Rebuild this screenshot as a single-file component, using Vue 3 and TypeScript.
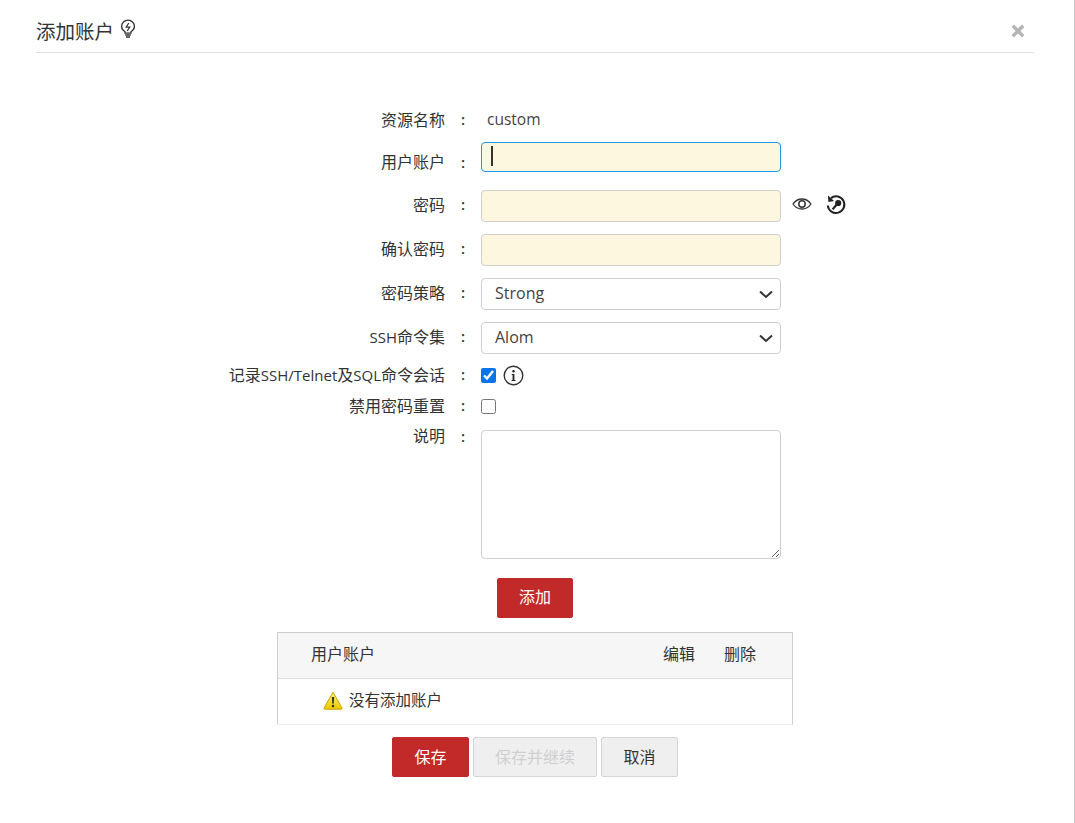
<script setup lang="ts">
const policy = ['Strong']
const commands = ['Alom']
</script>

<template>
  <div class="modal">
    <header class="head">
      <div class="title">
        <span>添加账户</span>
        <svg class="bulb" width="18" height="20" viewBox="0 0 18 20" fill="none" stroke="#333" stroke-width="1.300">
          <path d="M6 14.200v-1.500C4.200 11.700 2.600 10 2.600 7.600a6.400 6.400 0 0 1 12.800 0c0 2.400-1.600 4.100-3.400 5.100v1.500z" />
          <path d="M6.200 16h5.600M7 18h4" stroke-width="1.600" />
          <path d="M9.800 4 7.200 8.200h3.600L8.200 12" stroke-width="1.200" />
        </svg>
      </div>
      <svg class="close" width="14" height="14" viewBox="0 0 14 14" stroke="#b5b5b5" stroke-width="3.400">
        <path d="M1.800 1.800 12.200 12.200M12.200 1.800 1.800 12.200" />
      </svg>
    </header>

    <form class="form" @submit.prevent>
      <div class="row row-name">
        <label>资源名称</label><span class="colon">:</span>
        <span class="value">custom</span>
      </div>
      <div class="row row-user">
        <label>用户账户</label><span class="colon">:</span>
        <div class="caret-wrap">
          <input class="field focus" type="text" />
          <span class="caret"></span>
        </div>
      </div>
      <div class="row row-pass lifted">
        <label>密码</label><span class="colon">:</span>
        <input class="field" type="password" />
        <svg class="eye" width="20" height="14" viewBox="0 0 20 14" fill="none" stroke="#333" stroke-width="1.300">
          <path d="M1 7c2.200-3.200 5.200-5 9-5s6.800 1.800 9 5c-2.200 3.200-5.200 5-9 5s-6.800-1.800-9-5z" />
          <circle cx="10" cy="7" r="3.200" stroke-width="1.500" />
        </svg>
        <svg class="key" width="22" height="22" viewBox="0 0 22 22" fill="none" stroke="#222">
          <path d="M6 4.100A8.300 8.300 0 1 1 2.800 11.500" stroke-width="2" />
          <path d="M3 1.500 9 6.900 3.400 8z" fill="#222" stroke="none" />
          <circle cx="13.200" cy="9" r="3.100" fill="#222" stroke="none" />
          <path d="M11.500 10.800 7.600 15.400" stroke-width="2.200" />
        </svg>
      </div>
      <div class="row row-confirm lifted">
        <label>确认密码</label><span class="colon">:</span>
        <input class="field" type="password" />
      </div>
      <div class="row row-select lifted">
        <label>密码策略</label><span class="colon">:</span>
        <select class="field select">
          <option v-for="p in policy" :key="p">{{ p }}</option>
        </select>
      </div>
      <div class="row row-select lifted">
        <label><span class="latin">SSH</span>命令集</label><span class="colon">:</span>
        <select class="field select">
          <option v-for="c in commands" :key="c">{{ c }}</option>
        </select>
      </div>
      <div class="row row-check first-check">
        <label>记录<span class="latin">SSH/Telnet</span>及<span class="latin">SQL</span>命令会话</label><span class="colon">:</span>
        <input class="check" type="checkbox" checked />
        <svg class="info" width="21" height="21" viewBox="0 0 21 21" fill="none">
          <circle cx="10.500" cy="10.500" r="9.300" stroke="#333" stroke-width="1.400" />
          <circle cx="10.500" cy="6.200" r="1.200" fill="#222" />
          <path d="M8.700 9.100h2.700v5.900h1v1H8.600v-1h1v-4.900h-.9z" fill="#222" />
        </svg>
      </div>
      <div class="row row-check second-check">
        <label>禁用密码重置</label><span class="colon">:</span>
        <input class="check" type="checkbox" />
      </div>
      <div class="row row-note">
        <label>说明</label><span class="colon">:</span>
        <textarea class="field note"></textarea>
      </div>

      <div class="add-line">
        <button class="btn primary add" type="button">添加</button>
      </div>

      <div class="table">
        <div class="thead">
          <span class="th-user">用户账户</span>
          <span class="th-edit">编辑</span>
          <span class="th-del">删除</span>
        </div>
        <div class="tbody">
          <svg width="20" height="19" viewBox="0 0 20 19">
            <defs>
              <linearGradient id="warn" x1="0" y1="0" x2="0" y2="1">
                <stop offset="0" stop-color="#fff27a" />
                <stop offset="1" stop-color="#eec900" />
              </linearGradient>
            </defs>
            <path d="M10 1.200 19 17a.8.8 0 0 1-.7 1.200H1.700A.8.8 0 0 1 1 17z" fill="url(#warn)" stroke="#c9a600" stroke-width="1" />
            <path d="M8.900 6h2.200l-.4 6.800H9.300z" fill="#333" />
            <circle cx="10" cy="15" r="1.300" fill="#333" />
          </svg>
          <span class="empty">没有添加账户</span>
        </div>
      </div>

      <div class="actions">
        <button class="btn primary save" type="button">保存</button>
        <button class="btn ghost disabled" type="button">保存并继续</button>
        <button class="btn ghost cancel" type="button">取消</button>
      </div>
    </form>
  </div>
</template>

<style>
html, body { margin: 0; background: #fff; }
</style>

<style scoped>
.modal {
  box-sizing: border-box;
  width: 1075px;
  height: 823px;
  padding: 0 40px 0 36px;
  border-right: 1px solid #c8c8c8;
  overflow: hidden;
  color: #333;
  font-family: "Open Sans", "Noto Sans CJK SC", sans-serif;
  font-size: 16px;
}
.head {
  height: 53px;
  box-sizing: border-box;
  border-bottom: 1px solid #dfdfdf;
  display: flex;
  align-items: flex-start;
  justify-content: space-between;
}
.title {
  margin-top: 18px;
  display: flex;
  align-items: flex-start;
  gap: 5px;
  font-size: 19.5px;
  line-height: 28px;
  color: #333;
}
.bulb { margin-top: 1px; }
.close { margin-top: 24px; margin-right: 9px; }
.form { display: flex; flex-direction: column; }
.row {
  display: grid;
  grid-template-columns: 409px 36px auto;
  grid-auto-flow: column;
  justify-content: start;
  align-items: center;
}
.row label { text-align: right; font-size: 16px; color: #333; white-space: nowrap; }
.latin { font-size: 15px; }
.colon { text-align: center; font-weight: 600; font-size: 15px; }
.lifted label, .lifted .colon { padding-bottom: 5px; }
.row-check label, .row-check .colon { padding-bottom: 2px; }
.row-user label, .row-user .colon { line-height: 16px; padding-top: 10px; }
.row-name { margin-top: 51px; height: 30px; }
.value { font-size: 15.5px; margin-left: 6px; color: #444; }
.row-user { margin-top: 8px; height: 30px; }
.row-pass { margin-top: 18px; height: 32px; }
.row-confirm { margin-top: 12px; height: 32px; }
.row-select { margin-top: 12px; height: 32px; }
.first-check { margin-top: 5px; height: 32px; }
.second-check { margin-top: -1px; height: 32px; }
.row-note { margin-top: 8px; align-items: start; }
.row-note label, .row-note .colon { line-height: 12px; }
.field {
  box-sizing: border-box;
  width: 300px;
  height: 32px;
  margin: 0;
  padding: 0 13px;
  border: 1px solid #cfcfcf;
  border-radius: 4px;
  background: #fdf7df;
  font: inherit;
  color: #333;
  outline: none;
  display: block;
}
.field.focus { height: 30px; border-color: #1a9ae0; }
.caret-wrap { position: relative; width: 300px; height: 30px; }
.caret {
  position: absolute;
  left: 10px;
  top: 4px;
  width: 2px;
  height: 20px;
  background: #333;
}
.select {
  appearance: none;
  background: #fff url("data:image/svg+xml,%3Csvg xmlns='http://www.w3.org/2000/svg' width='14' height='9' viewBox='0 0 14 9' fill='none' stroke='%23333' stroke-width='2'%3E%3Cpath d='M1 1.500l6 5.500 6-5.500'/%3E%3C/svg%3E") no-repeat right 7px center;
  font-size: 16px;
  padding-bottom: 2px;
  color: #444;
}
.eye { margin: 0 0 4px 11px; grid-column: 4; }
.key { margin: 0 0 2px 13px; grid-column: 5; }
.check { width: 15px; height: 15px; margin: 0; accent-color: #0a75e8; }
.info { margin-left: 7px; grid-column: 4; }
.note { height: 129px; background: #fff; resize: vertical; }
.add-line { margin-top: 19px; padding-left: 461px; }
.btn {
  box-sizing: border-box;
  height: 40px;
  border-radius: 2px;
  font: inherit;
  font-size: 16px;
  padding: 0 0 3px;
  cursor: pointer;
}
.primary { background: #c22a2a; border: 1px solid #c22a2a; color: #fff; }
.add { width: 76px; display: block; padding-bottom: 5px; }
.table {
  box-sizing: border-box;
  width: 516px;
  height: 93px;
  margin: 14px 0 0 241px;
  border: 1px solid #cfcfcf;
  border-bottom-color: #ececec;
}
.thead {
  height: 46px;
  display: flex;
  align-items: center;
  background: #f6f6f6;
  border-bottom: 1px solid #dcdcdc;
  box-sizing: border-box;
  padding-bottom: 5px;
}
.th-user { margin-left: 33px; width: 352px; }
.th-edit { width: 61px; }
.tbody {
  height: 44px;
  display: flex;
  align-items: center;
  gap: 6px;
  padding: 0 0 2px 45px;
  box-sizing: border-box;
}
.empty { font-size: 15.5px; padding-bottom: 2px; }
.actions {
  margin: 12px 0 0 356px;
  display: flex;
  gap: 4px;
}
.save { width: 77px; }
.ghost { background: #efefef; border: 1px solid #d4d4d4; color: #333; }
.disabled { width: 124px; color: #cfcfcf; }
.cancel { width: 77px; }
</style>
